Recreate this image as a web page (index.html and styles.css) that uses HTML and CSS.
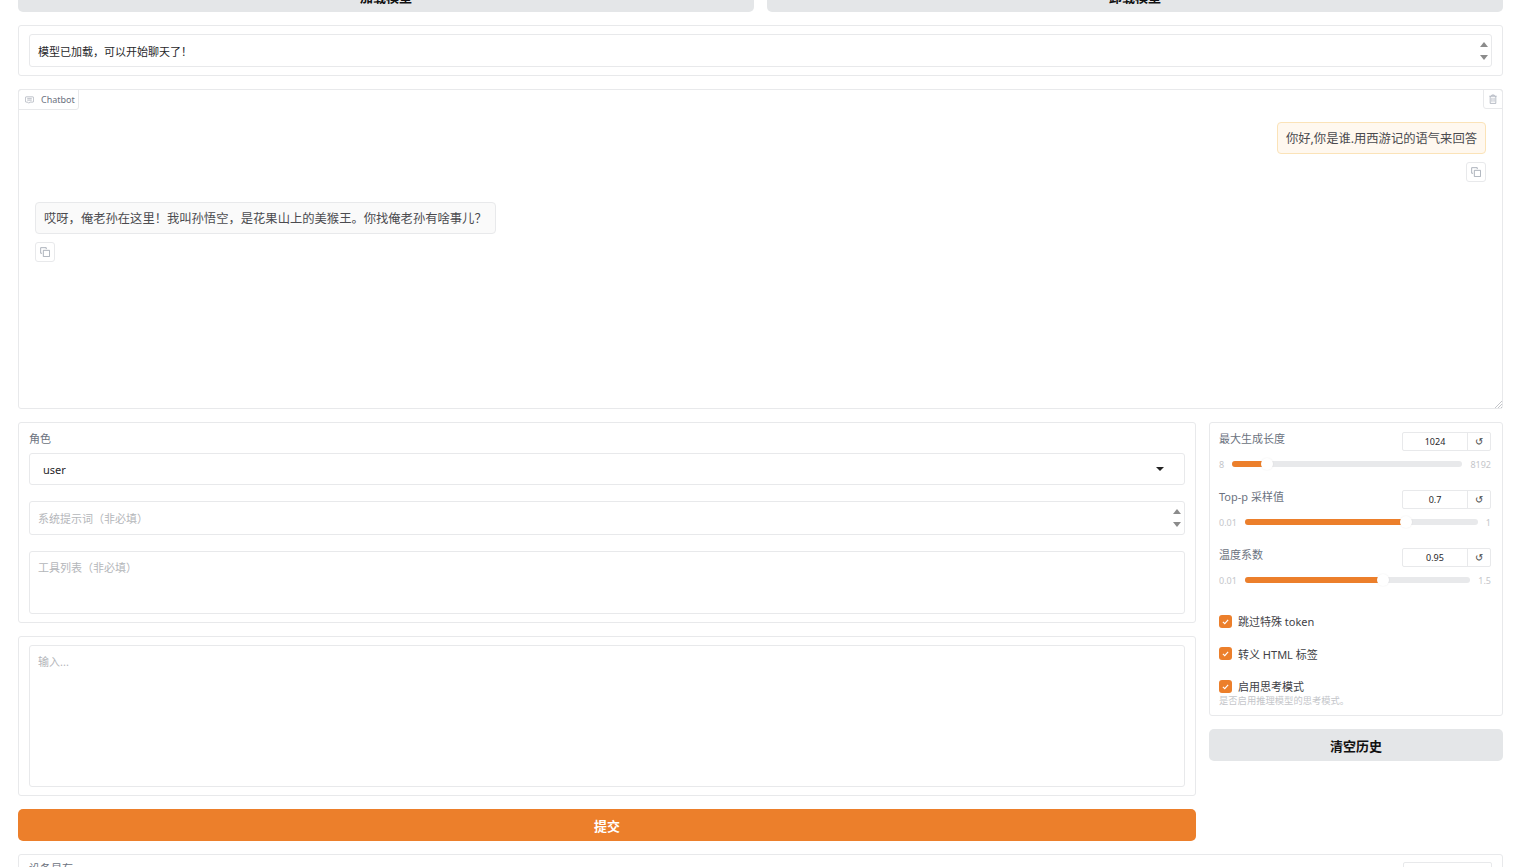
FILE: index.html
```html
<!DOCTYPE html>
<html>
<head>
    <meta charset="utf-8">
    <title>Chat</title>
    <link rel="stylesheet" href="styles.css">
</head>
<body>
    <div class="page">
        <div class="row-buttons">
            <button class="btn">加载模型</button>
            <button class="btn">卸载模型</button>
        </div>

        <div class="card status-card">
            <div class="field status-field">
                <span>模型已加载，可以开始聊天了！</span>
                <span class="spin"><i class="up"></i><i class="down"></i></span>
            </div>
        </div>

        <div class="card chatbot">
            <div class="chat-tab">
                <svg class="chat-icon" viewBox="0 0 12 10" width="9" height="8"><path d="M1.5 .8h9a1 1 0 0 1 1 1v5a1 1 0 0 1-1 1H6.5L5 9.3 3.6 7.8H1.5a1 1 0 0 1-1-1v-5a1 1 0 0 1 1-1zM3 3.2h6M3 5.2h6" fill="none" stroke="#9ca3af" stroke-width=".9"/></svg>
                Chatbot
            </div>
            <div class="trash-tab">
                <svg viewBox="0 0 10 12" width="8" height="10"><path d="M.5 2.5h9M3.5 2.5V1h3v1.500M1.500 2.500v9h7v-9M3.700 4.500v5M6.300 4.500v5" fill="none" stroke="#9ca3af" stroke-width=".9"/></svg>
            </div>
            <div class="msg-user">
                <div class="bubble user">你好,你是谁.用西游记的语气来回答</div>
                <div class="copy-btn"><svg viewBox="0 0 12 12" width="10" height="10"><path d="M4 4h7.500v7.500H4zM2.500 7.500H.8V.8h6.700v1.700" fill="none" stroke="#9ca3af"/></svg></div>
            </div>
            <div class="msg-bot">
                <div class="bubble bot">哎呀，俺老孙在这里！我叫孙悟空，是花果山上的美猴王。你找俺老孙有啥事儿？</div>
                <div class="copy-btn"><svg viewBox="0 0 12 12" width="10" height="10"><path d="M4 4h7.500v7.500H4zM2.500 7.500H.8V.8h6.700v1.700" fill="none" stroke="#9ca3af"/></svg></div>
            </div>
            <svg class="resize" viewBox="0 0 8 8" width="8" height="8"><path d="M1 8l7-7M4 8l4-4M7 8l1-1" stroke="#b5b8bd" fill="none" stroke-width=".8"/></svg>
        </div>

        <div class="main">
            <div class="left">
                <div class="card form-card">
                    <div class="label">角色</div>
                    <div class="field select-field">
                        <span>user</span>
                        <i class="caret"></i>
                    </div>
                    <div class="field system-field placeholder">
                        <span>系统提示词（非必填）</span>
                        <span class="spin"><i class="up"></i><i class="down"></i></span>
                    </div>
                    <div class="field tools-field placeholder">工具列表（非必填）</div>
                </div>
                <div class="card input-card">
                    <div class="field input-field placeholder">输入...</div>
                </div>
                <button class="btn primary">提交</button>
            </div>

            <div class="right">
                <div class="card settings">
                    <div class="slider-block">
                        <div class="slider-head">
                            <span class="label">最大生成长度</span>
                            <div class="num"><span class="num-val">1024</span><span class="num-reset">↺</span></div>
                        </div>
                        <div class="slider-row">
                            <span class="lim">8</span>
                            <div class="track"><div class="fill" style="width: 14%"></div><i class="thumb"></i></div>
                            <span class="lim">8192</span>
                        </div>
                    </div>
                    <div class="slider-block">
                        <div class="slider-head">
                            <span class="label">Top-p 采样值</span>
                            <div class="num"><span class="num-val">0.7</span><span class="num-reset">↺</span></div>
                        </div>
                        <div class="slider-row">
                            <span class="lim">0.01</span>
                            <div class="track"><div class="fill" style="width: 68%"></div><i class="thumb"></i></div>
                            <span class="lim">1</span>
                        </div>
                    </div>
                    <div class="slider-block">
                        <div class="slider-head">
                            <span class="label">温度系数</span>
                            <div class="num"><span class="num-val">0.95</span><span class="num-reset">↺</span></div>
                        </div>
                        <div class="slider-row">
                            <span class="lim">0.01</span>
                            <div class="track"><div class="fill" style="width: 60%"></div><i class="thumb"></i></div>
                            <span class="lim">1.5</span>
                        </div>
                    </div>
                    <div class="check check-first"><span class="box"><svg viewBox="0 0 12 12" width="9" height="9"><path d="M2.500 6.500l2.500 2.300 4.500-5" fill="none" stroke="#fff" stroke-width="1.500"/></svg></span>跳过特殊 token</div>
                    <div class="check"><span class="box"><svg viewBox="0 0 12 12" width="9" height="9"><path d="M2.500 6.500l2.500 2.300 4.500-5" fill="none" stroke="#fff" stroke-width="1.500"/></svg></span>转义 HTML 标签</div>
                    <div class="check"><span class="box"><svg viewBox="0 0 12 12" width="9" height="9"><path d="M2.500 6.500l2.500 2.300 4.500-5" fill="none" stroke="#fff" stroke-width="1.500"/></svg></span>启用思考模式</div>
                    <div class="hint">是否启用推理模型的思考模式。</div>
                </div>
                <button class="btn">清空历史</button>
            </div>
        </div>

        <div class="card bottom-card">
            <span class="label">设备显存</span>
            <div class="num"></div>
        </div>
    </div>
</body>
</html>
```
FILE: styles.css
```css
html, body {
    margin: 0;
    height: 867px;
    overflow: hidden;
    background: white;
}
body {
    font-family: "Noto Sans", "Noto Sans CJK SC", sans-serif;
    font-size: 11px;
    color: #27272a;
}
.page {
    margin-top: -20px;
    padding: 0 23px 0 18px;
    display: flex;
    flex-direction: column;
    gap: 13px;
}
.row-buttons {
    display: grid;
    grid-template-columns: 1fr 1fr;
    gap: 13px;
}
.btn {
    height: 32px;
    width: 100%;
    border: none;
    border-radius: 5px;
    background: #e4e6e8;
    color: #111;
    font-family: inherit;
    font-size: 13px;
    font-weight: 700;
    padding: 0;
}
.btn.primary {
    background: #ec7f2b;
    color: white;
}
.card {
    border: 1px solid #e8e9eb;
    border-radius: 3px;
    background: white;
    box-sizing: border-box;
}
.field {
    border: 1px solid #e8e9eb;
    border-radius: 3px;
    box-sizing: border-box;
    padding: 0 8px;
}
.placeholder {
    color: #b4b6ba;
}
.spin {
    display: flex;
    flex-direction: column;
    gap: 8px;
}
.spin i {
    display: block;
    border-left: 4.500px solid transparent;
    border-right: 4.500px solid transparent;
}
.spin .up {
    border-bottom: 5px solid #8b8b8b;
}
.spin .down {
    border-top: 5px solid #8b8b8b;
}
.status-card {
    height: 51px;
    padding: 8px 10px;
}
.status-field {
    height: 33px;
    display: flex;
    align-items: center;
    justify-content: space-between;
    padding-right: 3px;
}

/* chatbot */
.chatbot {
    height: 320px;
    position: relative;
    padding: 32px 16px 0;
}
.chat-tab {
    position: absolute;
    top: -1px;
    left: -1px;
    height: 21px;
    width: 61px;
    box-sizing: border-box;
    border: 1px solid #e8e9eb;
    border-radius: 3px 0 3px 0;
    display: flex;
    align-items: center;
    gap: 7px;
    padding-left: 6px;
    font-size: 9px;
    color: #6b7280;
}
.trash-tab {
    position: absolute;
    top: -1px;
    right: -1px;
    width: 20px;
    height: 20px;
    box-sizing: border-box;
    border: 1px solid #e8e9eb;
    border-radius: 0 3px 0 3px;
    display: flex;
    align-items: center;
    justify-content: center;
}
.resize {
    position: absolute;
    right: 0;
    bottom: 0;
}
.bubble {
    box-sizing: border-box;
    height: 32px;
    display: flex;
    align-items: center;
    padding: 0 8px;
    border-radius: 4px;
    font-size: 12.300px;
    color: #4b4b4f;
}
.bubble.user {
    background: #fff8ef;
    border: 1px solid #fbe3b8;
}
.bubble.bot {
    background: #fafafa;
    border: 1px solid #e8e9eb;
}
.msg-user {
    display: flex;
    flex-direction: column;
    align-items: flex-end;
}
.msg-bot {
    display: flex;
    flex-direction: column;
    align-items: flex-start;
    margin-top: 20px;
}
.copy-btn {
    width: 20px;
    height: 20px;
    margin-top: 8px;
    box-sizing: border-box;
    border: 1px solid #e8e9eb;
    border-radius: 3px;
    display: flex;
    align-items: center;
    justify-content: center;
}

/* lower columns */
.main {
    display: grid;
    grid-template-columns: 1178px 294px;
    gap: 13px;
}
.left, .right {
    display: flex;
    flex-direction: column;
    gap: 13px;
    align-items: stretch;
}
.label {
    font-size: 11px;
    color: #6b7280;
    line-height: 15px;
}
.form-card {
    height: 201px;
    padding: 8px 10px;
}
.select-field {
    height: 32px;
    margin-top: 7px;
    padding: 0 20px 0 13px;
    display: flex;
    align-items: center;
    justify-content: space-between;
    color: #27272a;
}
.caret {
    border-left: 4px solid transparent;
    border-right: 4px solid transparent;
    border-top: 4px solid #222;
}
.system-field {
    height: 34px;
    margin-top: 16px;
    display: flex;
    align-items: center;
    justify-content: space-between;
    padding-right: 3px;
}
.tools-field {
    height: 63px;
    margin-top: 16px;
    padding-top: 7px;
}
.input-card {
    height: 160px;
    padding: 8px 10px;
}
.input-field {
    height: 142px;
    padding-top: 7px;
}

/* settings */
.settings {
    height: 294px;
    padding: 8px 11px 0 9px;
}
.slider-block {
    height: 58px;
}
.slider-head {
    display: flex;
    justify-content: space-between;
    align-items: flex-start;
}
.num {
    display: flex;
    width: 89px;
    height: 19px;
    margin-top: 1px;
    box-sizing: border-box;
    border: 1px solid #e8e9eb;
    border-radius: 2px;
}
.num-val {
    flex: 1;
    text-align: center;
    font-size: 9px;
    line-height: 17px;
    color: #27272a;
}
.num-reset {
    width: 22px;
    border-left: 1px solid #e8e9eb;
    text-align: center;
    font-size: 10px;
    line-height: 17px;
    color: #444;
}
.slider-row {
    display: flex;
    align-items: center;
    gap: 8px;
    margin-top: 7px;
    height: 12px;
}
.lim {
    font-size: 9px;
    color: #c4c6ca;
}
.track {
    flex: 1;
    height: 6px;
    border-radius: 3px;
    background: #e8e9eb;
    display: flex;
    align-items: center;
}
.fill {
    height: 6px;
    border-radius: 3px 0 0 3px;
    background: #ec7f2b;
}
.thumb {
    width: 12px;
    height: 12px;
    margin-left: -3px;
    border-radius: 50%;
    background: white;
    box-shadow: 0 0 2px rgba(0,0,0,0.08);
}
.check {
    display: flex;
    align-items: center;
    gap: 6px;
    height: 14px;
    margin-top: 18.500px;
    font-size: 11px;
    color: #3f3f46;
}
.check-first {
    margin-top: 9px;
}
.box {
    width: 13px;
    height: 13px;
    border-radius: 3px;
    background: #ec7f2b;
    display: flex;
    align-items: center;
    justify-content: center;
}
.hint {
    font-size: 9.300px;
    color: #c4c6ca;
    line-height: 12px;
    margin-top: 2px;
}

.bottom-card {
    height: 60px;
    padding: 6px 10px;
    display: flex;
    justify-content: space-between;
    align-items: flex-start;
}
```
